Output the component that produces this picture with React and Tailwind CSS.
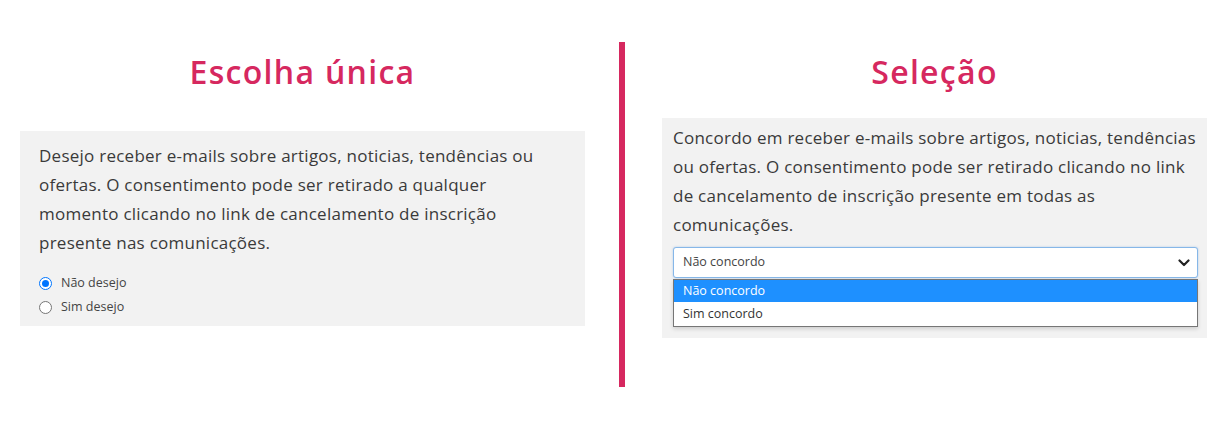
import React from "react";

const body = { fontFamily: '"Open Sans", "Noto Sans", sans-serif' };
const head = { fontFamily: '"Open Sans", "Liberation Sans", sans-serif' };

function Radio({ checked, label }) {
  return (
    <div className="flex items-center h-6">
      <span className="ml-[19px] w-[13px] h-[13px] rounded-full flex items-center justify-center border border-solid shrink-0 bg-white"
        style={{ borderColor: checked ? "#0075ff" : "#767676" }}>
        {checked && <span className="w-[7px] h-[7px] rounded-full bg-[#0075ff]" />}
      </span>
      <span className="ml-[9px] text-[12.5px] text-[#444]">{label}</span>
    </div>
  );
}

export default function App() {
  return (
    <div className="w-[1231px] h-[422px] bg-white flex items-start" style={body}>
      <div className="ml-[20px] w-[565px] pt-[52px] flex flex-col">
        <h2 className="h-[40px] leading-[40px] text-center text-[32px] font-semibold text-[#d6285f] tracking-[1.3px]" style={head}>
          Escolha única
        </h2>
        <div className="mt-[39px] bg-[#f2f2f2] h-[195px] pt-[10px] pl-[19px]">
          <p className="text-[17px] leading-[29px] text-[#3a3a3a] tracking-[0.25px] whitespace-nowrap">
            Desejo receber e-mails sobre artigos, noticias, tendências ou<br />
            ofertas. O consentimento pode ser retirado a qualquer<br />
            momento clicando no link de cancelamento de inscrição<br />
            presente nas comunicações.
          </p>
          <div className="mt-[14px] -ml-[19px]">
            <Radio checked label="Não desejo" />
            <Radio label="Sim desejo" />
          </div>
        </div>
      </div>
      <div className="ml-[34px] mt-[42px] w-[6px] h-[345px] bg-[#d6285f]" />
      <div className="ml-[37px] w-[545px] pt-[52px] flex flex-col">
        <h2 className="h-[40px] leading-[40px] text-center text-[32px] font-semibold text-[#d6285f] tracking-[1.3px]" style={head}>
          Seleção
        </h2>
        <div className="mt-[26px] bg-[#f2f2f2] h-[220px] pt-[5px] pl-[11px] pr-[9px]">
          <p className="text-[17px] leading-[29px] text-[#3a3a3a] tracking-[0.25px] whitespace-nowrap">
            Concordo em receber e-mails sobre artigos, noticias, tendências<br />
            ou ofertas. O consentimento pode ser retirado clicando no link<br />
            de cancelamento de inscrição presente em todas as<br />
            comunicações.
          </p>
          <div className="relative mt-[8px]">
            <div className="h-[31px] bg-white border border-solid border-[#86b7e8] rounded-[3px] flex items-center pl-[9px] pr-[6px] shadow-[0_0_2px_rgba(100,160,230,0.5)]">
              <span className="text-[12.5px] text-[#444] flex-1">Não concordo</span>
              <svg width="12" height="8" viewBox="0 0 12 8" className="mr-[1px]">
                <path d="M1.5 1.5 L6 6 L10.5 1.5" fill="none" stroke="#222" strokeWidth="2.2" strokeLinecap="round" strokeLinejoin="round" />
              </svg>
            </div>
            <div className="mt-[1px] bg-white border border-solid border-[#767676] shadow-[0_2px_4px_rgba(0,0,0,0.15)]">
              <div className="h-[22px] bg-[#1e90ff] text-white text-[12.5px] flex items-center pl-[9px]">Não concordo</div>
              <div className="h-[24px] text-[#333] text-[12.5px] flex items-center pl-[9px]">Sim concordo</div>
            </div>
          </div>
        </div>
      </div>
    </div>
  );
}
